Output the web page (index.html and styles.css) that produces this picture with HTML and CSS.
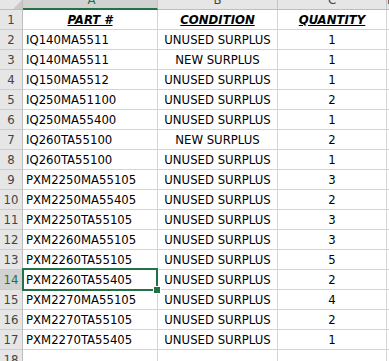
FILE: index.html
```html
<!DOCTYPE html>
<html>
<head>
<meta charset="utf-8">
<link rel="stylesheet" href="styles.css">
</head>
<body>
<div class="sheet">
  <div class="hdr-row">
    <div class="corner"><svg class="tri" width="22" height="9" viewBox="0 0 22 9"><polygon points="13,9 22,0 22,9" fill="#c9c9c9"/></svg></div>
    <div class="colhdr a sel"><span>A</span></div>
    <div class="colhdr b"><span>B</span></div>
    <div class="colhdr c"><span>C</span></div>
    <div class="colhdr d"><span>D</span></div>
  </div>
  <div class="row"><div class="rh">1</div><div class="cell a th">PART #</div><div class="cell b th">CONDITION</div><div class="cell c th">QUANTITY</div><div class="cell d"></div></div>
  <div class="row"><div class="rh">2</div><div class="cell a">IQ140MA5511</div><div class="cell b">UNUSED SURPLUS</div><div class="cell c">1</div><div class="cell d"></div></div>
  <div class="row"><div class="rh">3</div><div class="cell a">IQ140MA5511</div><div class="cell b">NEW SURPLUS</div><div class="cell c">1</div><div class="cell d"></div></div>
  <div class="row"><div class="rh">4</div><div class="cell a">IQ150MA5512</div><div class="cell b">UNUSED SURPLUS</div><div class="cell c">1</div><div class="cell d"></div></div>
  <div class="row"><div class="rh">5</div><div class="cell a">IQ250MA51100</div><div class="cell b">UNUSED SURPLUS</div><div class="cell c">2</div><div class="cell d"></div></div>
  <div class="row"><div class="rh">6</div><div class="cell a">IQ250MA55400</div><div class="cell b">UNUSED SURPLUS</div><div class="cell c">1</div><div class="cell d"></div></div>
  <div class="row"><div class="rh">7</div><div class="cell a">IQ260TA55100</div><div class="cell b">NEW SURPLUS</div><div class="cell c">2</div><div class="cell d"></div></div>
  <div class="row"><div class="rh">8</div><div class="cell a">IQ260TA55100</div><div class="cell b">UNUSED SURPLUS</div><div class="cell c">1</div><div class="cell d"></div></div>
  <div class="row"><div class="rh">9</div><div class="cell a">PXM2250MA55105</div><div class="cell b">UNUSED SURPLUS</div><div class="cell c">3</div><div class="cell d"></div></div>
  <div class="row"><div class="rh">10</div><div class="cell a">PXM2250MA55405</div><div class="cell b">UNUSED SURPLUS</div><div class="cell c">2</div><div class="cell d"></div></div>
  <div class="row"><div class="rh">11</div><div class="cell a">PXM2250TA55105</div><div class="cell b">UNUSED SURPLUS</div><div class="cell c">3</div><div class="cell d"></div></div>
  <div class="row"><div class="rh">12</div><div class="cell a">PXM2260MA55105</div><div class="cell b">UNUSED SURPLUS</div><div class="cell c">3</div><div class="cell d"></div></div>
  <div class="row"><div class="rh">13</div><div class="cell a">PXM2260TA55105</div><div class="cell b">UNUSED SURPLUS</div><div class="cell c">5</div><div class="cell d"></div></div>
  <div class="row"><div class="rh active">14</div><div class="cell a">PXM2260TA55405</div><div class="cell b">UNUSED SURPLUS</div><div class="cell c">2</div><div class="cell d"></div></div>
  <div class="row"><div class="rh">15</div><div class="cell a">PXM2270MA55105</div><div class="cell b">UNUSED SURPLUS</div><div class="cell c">4</div><div class="cell d"></div></div>
  <div class="row"><div class="rh">16</div><div class="cell a">PXM2270TA55105</div><div class="cell b">UNUSED SURPLUS</div><div class="cell c">2</div><div class="cell d"></div></div>
  <div class="row"><div class="rh">17</div><div class="cell a">PXM2270TA55405</div><div class="cell b">UNUSED SURPLUS</div><div class="cell c">1</div><div class="cell d"></div></div>
  <div class="row"><div class="rh">18</div><div class="cell a"></div><div class="cell b"></div><div class="cell c"></div><div class="cell d"></div></div>
  <div class="selection"></div>
  <div class="handle"></div>
</div>
</body>
</html>
```

FILE: styles.css
```css
* { box-sizing: border-box; }
html, body { margin: 0; padding: 0; background: #fff; overflow: hidden; }
body {
  font-family: "DejaVu Sans Condensed", "DejaVu Sans", sans-serif;
  font-stretch: condensed;
  font-size: 13px;
  color: #000;
}
.sheet { position: relative; width: 389px; height: 361px; overflow: hidden; }

.hdr-row { display: flex; height: 10px; }
.corner {
  flex: none; width: 23px; height: 10px;
  background: #e6e6e6;
  border-right: 1px solid #bdbdbd;
  border-bottom: 1px solid #bdbdbd;
}
.tri { display: block; }
.colhdr {
  flex: none; height: 10px;
  background: #e6e6e6;
  border-right: 1px solid #c4c4c4;
  border-bottom: 1px solid #bdbdbd;
  text-align: center;
  overflow: hidden;
  color: #444;
  line-height: 19px;
}
.colhdr span { display: block; margin-top: -10px; }
.colhdr.sel { background: #d2d2d2; border-bottom: 2px solid #217346; color: #217346; }
.colhdr.d { flex: 1; }

.row { display: flex; height: 20px; flex: none; }
.rh {
  flex: none; width: 23px; height: 20px;
  background: #e6e6e6;
  border-right: 1px solid #bdbdbd;
  border-bottom: 1px solid #cdcdcd;
  text-align: center;
  color: #444;
  line-height: 18px;
  padding-top: 1px;
}
.rh.active { background: #d2d2d2; color: #217346; }
.cell {
  flex: none; height: 20px;
  border-right: 1px solid #d4d4d4;
  border-bottom: 1px solid #d4d4d4;
  line-height: 18px;
  padding-top: 1px;
  white-space: nowrap;
  overflow: hidden;
}
.a { width: 135px; padding-left: 3px; }
.b { width: 120px; text-align: center; }
.c { width: 109px; text-align: center; }
.d { flex: 1; border-right: none; }
.th { font-weight: bold; font-style: italic; text-decoration: underline; text-align: center; }
.a.th { padding-left: 0; }

.selection {
  position: absolute;
  left: 22px; top: 268px;
  width: 136px; height: 23px;
  border: 2px solid #217346;
}
.handle {
  position: absolute;
  left: 153px; top: 286px;
  width: 8px; height: 8px;
  background: #217346;
  border: 1px solid #fff;
}
```
